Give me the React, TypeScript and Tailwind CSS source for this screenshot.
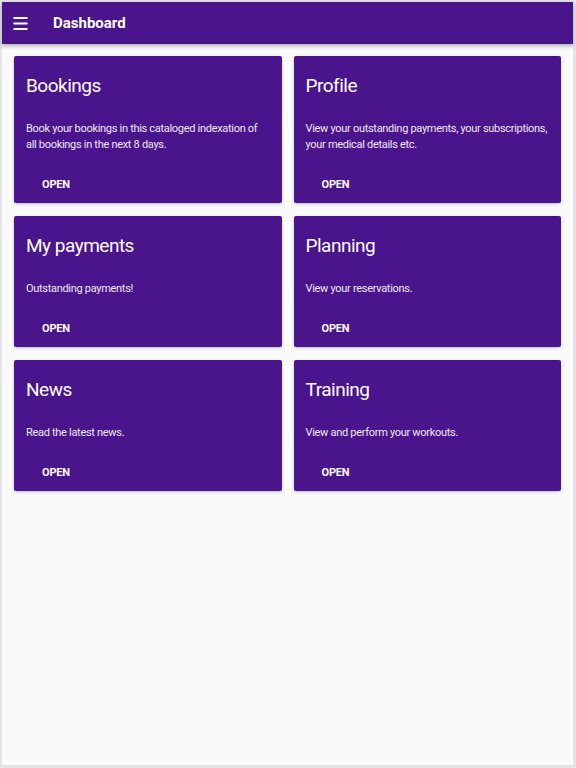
import { Menu } from "lucide-react";

interface Tile {
  title: string;
  text: string;
}

const tiles: Tile[] = [
  { title: "Bookings", text: "Book your bookings in this cataloged indexation of all\u00a0bookings in the next 8 days." },
  { title: "Profile", text: "View your outstanding payments, your subscriptions, your medical details etc." },
  { title: "My payments", text: "Outstanding payments!" },
  { title: "Planning", text: "View your reservations." },
  { title: "News", text: "Read the latest news." },
  { title: "Training", text: "View and perform your workouts." },
];

function DashboardCard({ title, text }: Tile) {
  return (
    <div className="flex flex-col rounded-[2px] bg-[#4a148c] pb-[10px] pl-3 pr-[6px] pt-[16px] text-white shadow-[0_1px_3px_rgba(0,0,0,0.25)]">
      <h2 className="text-[19px] leading-[28px] font-normal tracking-[-0.5px]">{title}</h2>
      <p className="mt-[21px] text-[11px] leading-[16px] tracking-[-0.3px] text-white/90">{text}</p>
      <div className="flex-1" />
      <button type="button" className="mt-6 self-start px-4 text-[11px] font-bold uppercase leading-[16px] tracking-[-0.2px]">
        Open
      </button>
    </div>
  );
}

export default function App() {
  return (
    <div className="h-[768px] w-[576px] bg-[#e4e4e4] pb-[3px] pl-[2px] pr-[3px] pt-[2px] font-['Roboto','Liberation_Sans',sans-serif]">
      <div className="flex h-full flex-col bg-[#fafafa]">
        <header className="flex h-[42px] shrink-0 items-center bg-[#4a148c] pl-[9px] pr-3 text-white shadow-[0_2px_4px_rgba(0,0,0,0.3)]">
          <Menu size={19} strokeWidth={2.4} aria-hidden="true" />
          <h1 className="ml-[23px] text-[15px] font-bold">Dashboard</h1>
        </header>
        <main className="grid grid-cols-2 gap-x-3 gap-y-[13px] p-3">
          {tiles.map((tile) => (
            <DashboardCard key={tile.title} {...tile} />
          ))}
        </main>
      </div>
    </div>
  );
}
